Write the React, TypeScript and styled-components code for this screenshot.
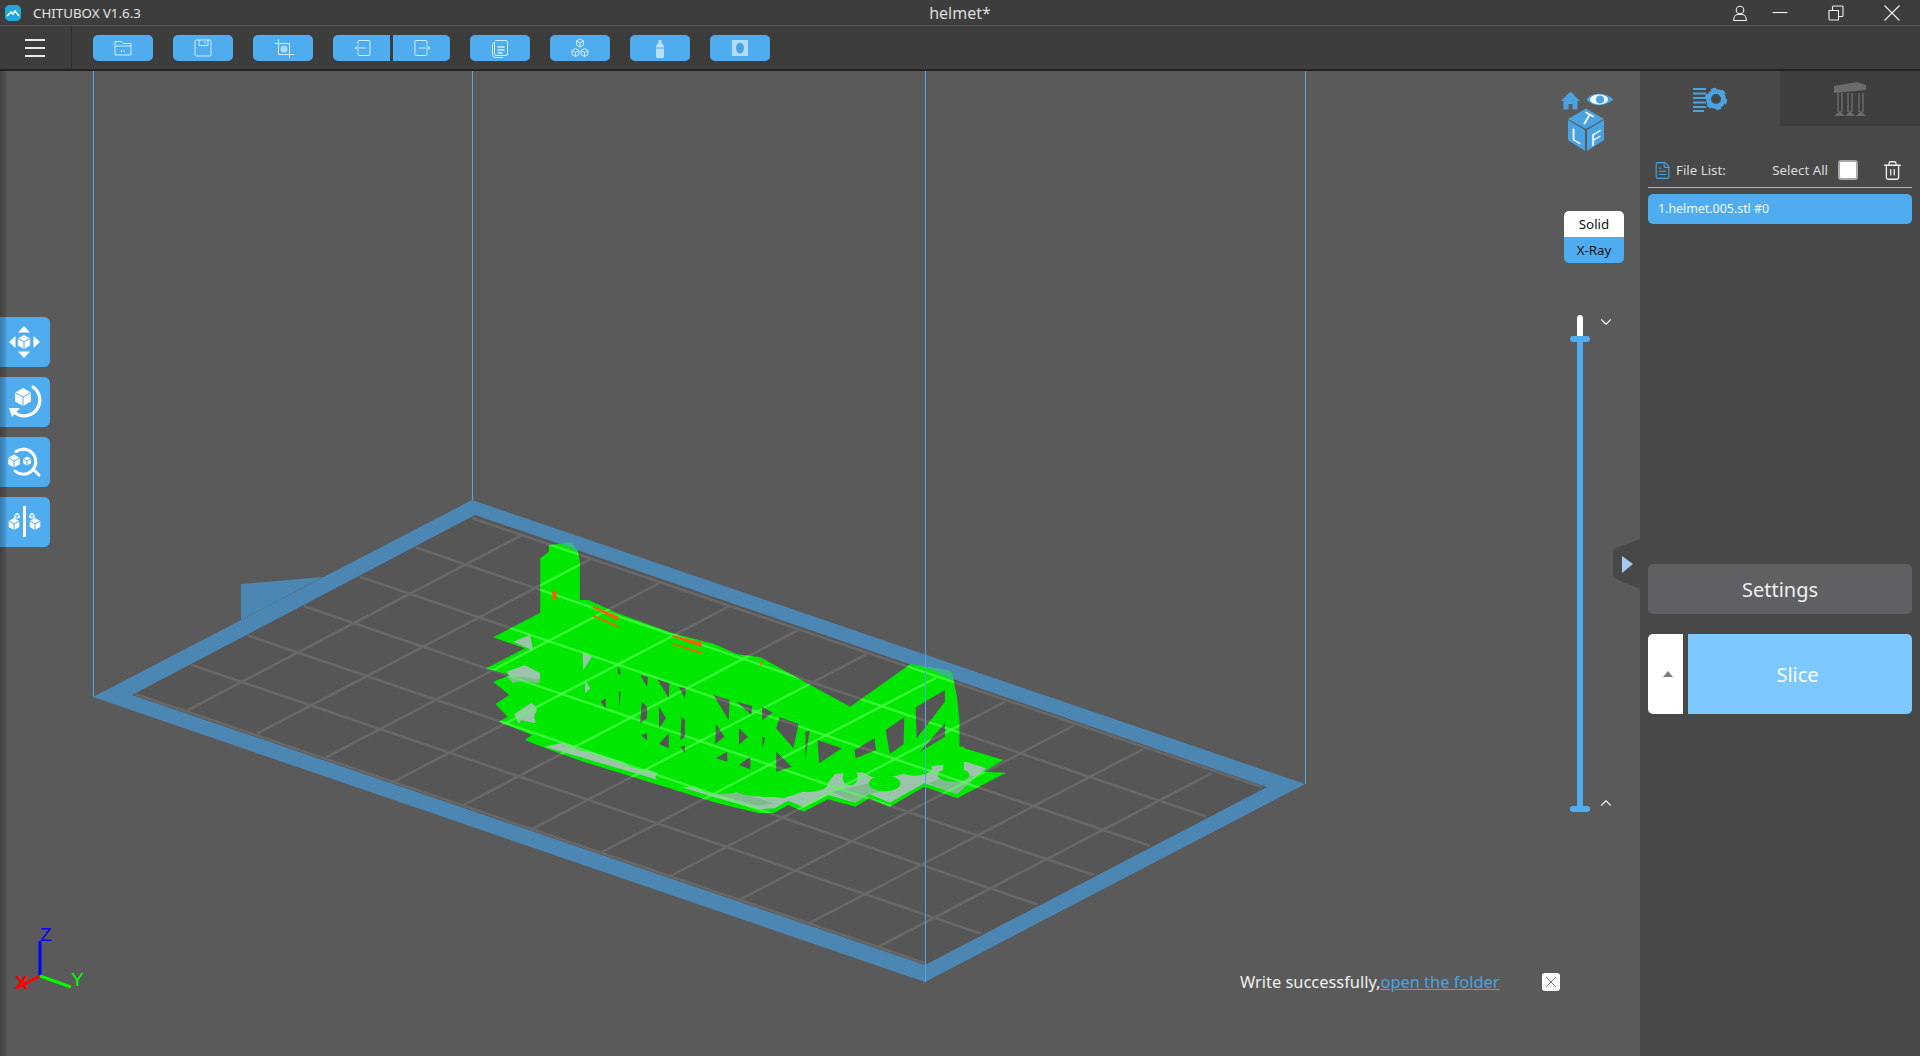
import styled, { createGlobalStyle } from "styled-components";
import { ChevronDown, ChevronUp, FileText, Trash2 } from "lucide-react";

const BLUE = "#4fadef";
const ICON_BLUE = "#4aa3e0";
const LINE = "#d4ecfc";

const GlobalStyle = createGlobalStyle`
  html, body {
    margin: 0;
    padding: 0;
    height: 100%;
    overflow: hidden;
    background: #5a5a5a;
  }
  * {
    box-sizing: border-box;
  }
  body {
    font-family: "Noto Sans", "Liberation Sans", sans-serif;
  }
`;

const SILHOUETTE =
  "M200 75L265 68L285 95L290 125L290 240L315 240L400 280L560 340L680 372L745 402L815 412L950 490L1075 560L1250 432L1370 455L1385 530L1392 600L1392 680L1520 720L1462 755L1528 758L1385 835L1290 800L1190 860L1130 835L1090 860L1010 838L940 875L895 855L855 878L810 880L690 850L300 725L190 685L130 660L150 645L55 605L80 590L45 552L85 525L38 485L90 465L18 445L130 385L38 352L175 278L175 115L200 95Z";

const HOLES = [
  "M465 465L488 472L485 500Z",
  "M515 478L550 490L548 535Z",
  "M577 500L598 505L595 535Z",
  "M678 525L725 540L722 600Z",
  "M745 545L790 558L788 585Z",
  "M818 560L850 578L820 600Z",
  "M870 592L925 612L910 685L860 625Z",
  "M945 635L957 632L945 715Z",
  "M980 660L1050 685L985 730Z",
  "M1088 690L1145 655L1150 690L1090 715Z",
  "M1178 630L1232 592L1230 672L1190 702Z",
  "M1265 562L1350 510L1350 545L1268 655Z",
  "M1278 695L1350 610L1350 650Z",
  "M470 545L485 560L485 595L465 610Z",
  "M520 560L540 595L520 625Z",
  "M585 590L595 600L595 650L582 660Z",
  "M685 612L710 650L683 672Z",
  "M752 625L778 650L752 675Z",
  "M820 650L828 655L820 685Z",
  "M468 645L485 640L485 662Z",
  "M520 672L548 640L548 685Z",
  "M685 715L718 695L718 725Z",
  "M752 735L785 710L785 748Z",
  "M860 695L905 740L860 755Z",
  "M582 680L595 678L595 700Z",
  "M403 515L408 515L405 565Z",
  "M350 545L365 535L365 565Z",
  "M400 440L410 458L402 465Z",
];

const PLATES = [
  "M188 680L240 668L370 712L520 760L680 805L880 835L1010 790L1030 762L1110 757L1140 772L1210 767L1300 740L1410 725L1470 745L1440 770L1385 822L1290 790L1190 848L1130 822L1090 848L1010 825L940 862L895 842L855 865L810 868L690 835L500 775Z",
  "M95 365L145 345L155 392L125 378Z",
  "M298 395L325 410L300 450Z",
  "M78 455L130 435L175 460L172 490L125 482L95 488Z",
  "M100 582L150 548L165 565L160 610L120 600L112 612Z",
  "M305 480L320 505L305 520Z",
];

const PLATE_SHADES = [
  "M520 775L690 825L810 858L855 850L700 800L560 765Z",
  "M78 470L125 470L172 478L172 490L125 482L95 488Z",
  "M1020 815L1130 790L1190 810L1130 822L1090 848Z",
  "M1300 790L1385 760L1440 770L1385 822Z",
];

const FEET: [number, number, number, number][] = [
  [205, 590, 48, 26],
  [270, 640, 40, 24],
  [330, 672, 60, 24],
  [480, 722, 60, 26],
  [600, 770, 90, 32],
  [700, 792, 75, 30],
  [840, 805, 105, 26],
  [950, 792, 60, 24],
  [1075, 772, 22, 24],
  [1175, 790, 46, 24],
  [1262, 745, 50, 22],
  [1375, 765, 46, 20],
];

// necks joining the feet up to the body: x, y, width, height
const NECKS: [number, number, number, number][] = [
  [1345, 680, 60, 85],
  [1150, 710, 50, 80],
  [1235, 700, 50, 45],
  [1060, 730, 30, 42],
  [920, 750, 60, 40],
];

const gridA = Array.from({ length: 7 }, (_, i) => ({
  x1: 135 + 56.2 * i,
  y1: 694 - 29.3 * i,
  x2: 925 + 56.2 * i,
  y2: 963 - 29.3 * i,
}));

const gridB = Array.from({ length: 11 }, (_, k) => ({
  x1: 188 + 69 * k,
  y1: 710 + 23.7 * k,
  x2: 522 + 69 * k,
  y2: 535 + 23.8 * k,
}));

const GridLines = ({ color, width }: { color: string; width: number }) => (
  <g stroke={color} strokeWidth={width}>
    {[...gridA, ...gridB].map((l, i) => (
      <line key={i} {...l} />
    ))}
  </g>
);

const MODEL_TRANSFORM = "translate(480 520) scale(0.3444 0.3333)";

const Scene = () => (
  <SceneSvg viewBox="0 71 1640 985">
    <defs>
      <clipPath id="model-clip">
        <path
          d={SILHOUETTE + HOLES.join("")}
          clipRule="evenodd"
          transform={MODEL_TRANSFORM}
        />
      </clipPath>
    </defs>
    <polygon points="475,515 1267,787 925,965 132,695" fill="#565656" />
    <GridLines color="#686868" width={2.6} />
    <path
      d="M472 500L1305 784L925 982L93 697Z M475 515L132 695L925 965L1267 787Z"
      fill="#4c86b3"
      fillRule="evenodd"
    />
    <polygon points="241,584 323,577 260,610 241,620" fill="#4c86b3" />
    <g transform={MODEL_TRANSFORM}>
      <path
        d={SILHOUETTE + HOLES.join("")}
        fill="#00e800"
        fillRule="evenodd"
      />
      <polygon points="235,72 265,65 285,95 255,80" fill="#3bb58a" />
      <polygon points="1255,432 1365,452 1375,480 1300,445" fill="#3bb58a" />
      {PLATES.map((d) => (
        <path key={d} d={d} fill="#9cc4ab" />
      ))}
      {PLATE_SHADES.map((d) => (
        <path key={d} d={d} fill="#7fbb8f" />
      ))}
      {NECKS.map(([x, y, width, height]) => (
        <rect key={x} x={x} y={y} width={width} height={height} fill="#00e800" />
      ))}
      {FEET.map(([cx, cy, rx, ry]) => (
        <ellipse key={cx} cx={cx} cy={cy} rx={rx} ry={ry} fill="#00e800" />
      ))}
    </g>
    <g clipPath="url(#model-clip)">
      <GridLines color="rgba(90,255,90,0.6)" width={2.5} />
    </g>
    <g transform={MODEL_TRANSFORM} fill="#ff5a10">
      <polygon points="325,262 330,258 403,290 400,302" />
      <polygon points="325,288 330,285 403,318 398,322" />
      <polygon points="555,348 560,345 645,368 642,382" />
      <polygon points="555,372 560,370 645,396 640,401" />
      <rect x="210" y="212" width="12" height="26" />
      <polygon points="812,425 820,422 816,442" />
    </g>
    <g stroke="#55a5e0" strokeWidth={1}>
      <line x1={93.5} y1={71} x2={93.5} y2={697} />
      <line x1={472.5} y1={71} x2={472.5} y2={500} />
      <line x1={925.5} y1={71} x2={925.5} y2={982} />
      <line x1={1305.5} y1={71} x2={1305.5} y2={784} />
    </g>
    <g strokeWidth={3}>
      <line x1={40} y1={976} x2={40} y2={941} stroke="#0000ff" />
      <line x1={40} y1={976} x2={16} y2={988} stroke="#ff0000" />
      <line x1={40} y1={976} x2={71} y2={987} stroke="#00ff00" />
    </g>
    <AxisLabel x={40} y={941} fill="#0000ff">Z</AxisLabel>
    <AxisLabel x={15} y={989} fill="#ff0000" fontWeight={700}>X</AxisLabel>
    <AxisLabel x={71} y={986} fill="#00ff00">Y</AxisLabel>
  </SceneSvg>
);

const Cube = ({ cx, cy, r }: { cx: number; cy: number; r: number }) => (
  <g>
    <polygon
      points={`${cx},${cy - r} ${cx + r * 0.88},${cy - r / 2} ${cx + r * 0.88},${cy + r / 2} ${cx},${cy + r} ${cx - r * 0.88},${cy + r / 2} ${cx - r * 0.88},${cy - r / 2}`}
      fill="#fff"
    />
    <path
      d={`M${cx} ${cy}L${cx} ${cy + r}M${cx} ${cy}L${cx + r * 0.88} ${cy - r / 2}M${cx} ${cy}L${cx - r * 0.88} ${cy - r / 2}`}
      stroke={BLUE}
      strokeWidth={1}
    />
  </g>
);

const MoveIcon = () => (
  <ToolSvg viewBox="0 0 50 50">
    <polygon points="24,9 30,15.500 18,15.500" fill="#fff" />
    <polygon points="24,41 30,34.500 18,34.500" fill="#fff" />
    <polygon points="9,25 15.500,19 15.500,31" fill="#fff" />
    <polygon points="40,25 33.500,19 33.500,31" fill="#fff" />
    <Cube cx={24} cy={25} r={7} />
  </ToolSvg>
);

const RotateIcon = () => (
  <ToolSvg viewBox="0 0 50 50">
    <Cube cx={23} cy={20} r={9} />
    <path
      d="M33 10A15.500 15.500 0 0 1 15 36"
      fill="none"
      stroke="#fff"
      strokeWidth={3.200}
      strokeLinecap="round"
    />
    <polygon points="9,31 20,31 12,40" fill="#fff" />
  </ToolSvg>
);

const ScaleIcon = () => (
  <ToolSvg viewBox="0 0 50 50">
    <Cube cx={14} cy={24} r={6.500} />
    <Cube cx={27} cy={24} r={4.500} />
    <path
      d="M16 14.500A12.500 12.500 0 1 1 15 34M34 33L39 38"
      fill="none"
      stroke="#fff"
      strokeWidth={3}
      strokeLinecap="round"
    />
  </ToolSvg>
);

const MirrorIcon = () => (
  <ToolSvg viewBox="0 0 50 50">
    <rect x={23} y={9} width={3} height={31} fill="#fff" />
    <Cube cx={14} cy={27} r={6} />
    <Cube cx={17} cy={19} r={3.200} />
    <Cube cx={35} cy={27} r={6} />
    <Cube cx={32} cy={19} r={3.200} />
  </ToolSvg>
);

const OpenIcon = () => (
  <BarSvg viewBox="0 0 24 24">
    <path d="M4 5.500h6.500l2 2H20V19H4zM4 10h16M10.500 14v2M13 14v2" />
  </BarSvg>
);

const SaveIcon = () => (
  <BarSvg viewBox="0 0 24 24">
    <path d="M5.500 4h13a1.500 1.500 0 0 1 1.500 1.500v13a1.500 1.500 0 0 1-1.500 1.500h-13A1.500 1.500 0 0 1 4 18.500v-13A1.500 1.500 0 0 1 5.500 4zM8 4v5.500h9V4M14 5.500v2" />
  </BarSvg>
);

const CropIcon = () => (
  <BarSvg viewBox="0 0 24 24">
    <path d="M7.500 3v15.500H23M3.500 7.500h15V22" />
    <circle cx={13} cy={13} r={3.500} fill={LINE} fillOpacity={0.7} stroke="none" />
  </BarSvg>
);

const ImportIcon = () => (
  <BarSvg viewBox="0 0 24 24">
    <path d="M8 8V5.500A1 1 0 0 1 9 4.500h10a1 1 0 0 1 1 1v13a1 1 0 0 1-1 1H9a1 1 0 0 1-1-1V16M16 12H6M9 9l-4 3 4 3" />
  </BarSvg>
);

const ExportIcon = () => (
  <BarSvg viewBox="0 0 24 24">
    <path d="M17 8V5.500a1 1 0 0 0-1-1H6a1 1 0 0 0-1 1v13a1 1 0 0 0 1 1h10a1 1 0 0 0 1-1V16M9 12h10M16 9l4 3-4 3" />
  </BarSvg>
);

const CopyIcon = () => (
  <BarSvg viewBox="0 0 24 24">
    <path d="M7 4.500h11a1.500 1.500 0 0 1 1.500 1.500v12a1.500 1.500 0 0 1-1.500 1.500H8a1.500 1.500 0 0 1-1.500-1.500V6M6.500 6.500L4.500 8v11.500L7 21.500h8" />
    <path d="M9.500 11h7M9.500 14h7M9.500 17h5" strokeWidth={1.400} />
  </BarSvg>
);

const CubesIcon = () => (
  <BarSvg viewBox="0 0 24 24">
    <path d="M12 3l3.500 2v4L12 11 8.500 9V5zM12 7v4M8.500 5L12 7l3.500-2" />
    <path d="M7.500 12.500L11 14.500v4l-3.500 2-3.500-2v-4zM7.500 16.500v4M4 14.500l3.500 2 3.500-2" />
    <path d="M16.500 12.500l3.500 2v4l-3.500 2-3.500-2v-4zM16.500 16.500v4M13 14.500l3.500 2 3.500-2" />
  </BarSvg>
);

const BottleIcon = () => (
  <BarSvg viewBox="0 0 24 24">
    <path
      d="M10.500 4h3v3l2.500 3v11a1 1 0 0 1-1 1H9a1 1 0 0 1-1-1V10l2.500-3z"
      fill={LINE}
      fillOpacity={0.8}
      stroke="none"
    />
    <path d="M8 12h8" stroke={BLUE} />
  </BarSvg>
);

const ResinIcon = () => (
  <BarSvg viewBox="0 0 24 24">
    <rect x={4} y={4} width={16} height={16} fill={LINE} fillOpacity={0.75} stroke="none" />
    <ellipse cx={12} cy={12} rx={4} ry={5.500} fill={ICON_BLUE} stroke="none" />
  </BarSvg>
);

const NavCube = () => (
  <CubeSvg viewBox="0 0 56 62">
    <path d="M1 11L10.500 1.500L20 11H17.500V19.500H12.500V14H8.500V19.500H3.500V11Z" fill={ICON_BLUE} />
    <path d="M26.500 9.500C31 3 44 1 53.500 9.500C44 18 31 16 26.500 9.500Z" fill={ICON_BLUE} />
    <ellipse cx={39} cy={9.500} rx={9} ry={5} fill="#f4f9fd" />
    <circle cx={40} cy={9.500} r={4} fill={ICON_BLUE} />
    <polygon points="26,18.500 44,29 26,39 8,29" fill={ICON_BLUE} />
    <polygon points="8,30 25,40 25,61 8,50" fill={ICON_BLUE} />
    <polygon points="27,40 44,30 44,50 27,61" fill={ICON_BLUE} />
    <CubeLetter transform="translate(24 34) rotate(30)">T</CubeLetter>
    <CubeLetter transform="translate(16 52) skewY(30)">L</CubeLetter>
    <CubeLetter transform="translate(36 54) skewY(-30)">F</CubeLetter>
  </CubeSvg>
);

const App = () => {
  return (
    <Page>
      <GlobalStyle />
      <TitleBar>
        <Brand>
          <svg width="16" height="16" viewBox="0 0 16 16">
            <path d="M3 0H13L16 3V13L13 16H3L0 13V3Z" fill="#1fa8d8" />
            <path d="M2 11L6 7L8 9L10 6L14 11" fill="none" stroke="#fff" strokeWidth={1.500} />
          </svg>
          CHITUBOX V1.6.3
        </Brand>
        <DocTitle>helmet*</DocTitle>
        <WinButtons>
          <UserSlot>
            <WinSvg viewBox="0 0 16 16">
              <circle cx={8} cy={5} r={3.800} />
              <path d="M1.800 15.500v-1.500c0-2.500 2-4.500 4.500-4.500h3.400c2.500 0 4.500 2 4.500 4.500v1.500z" />
            </WinSvg>
          </UserSlot>
          <WinSvg viewBox="0 0 16 16">
            <path d="M0.500 7.500H15.500" />
          </WinSvg>
          <WinSvg viewBox="0 0 16 16">
            <path d="M1 5.500h9.500v9.500H2a1 1 0 0 1-1-1zM4.500 5.500V2a1 1 0 0 1 1-1H14a1 1 0 0 1 1 1v8.500a1 1 0 0 1-1 1h-3.500" />
          </WinSvg>
          <WinSvg viewBox="0 0 16 16">
            <path d="M0.500 0.500L15.500 15.500M15.500 0.500L0.500 15.500" />
          </WinSvg>
        </WinButtons>
      </TitleBar>
      <Toolbar>
        <MenuCell>
          <MenuBar />
          <MenuBar />
          <MenuBar />
        </MenuCell>
        <ToolGroup>
          <BarButton><OpenIcon /></BarButton>
          <BarButton><SaveIcon /></BarButton>
          <BarButton><CropIcon /></BarButton>
          <Joined>
            <BarButton $side="left"><ImportIcon /></BarButton>
            <BarButton $side="right"><ExportIcon /></BarButton>
          </Joined>
          <BarButton><CopyIcon /></BarButton>
          <BarButton><CubesIcon /></BarButton>
          <BarButton><BottleIcon /></BarButton>
          <BarButton><ResinIcon /></BarButton>
        </ToolGroup>
      </Toolbar>
      <Main>
        <Viewport>
          <Scene />
          <EdgeShade />
          <SideTools>
            <SideTool><MoveIcon /></SideTool>
            <SideTool><RotateIcon /></SideTool>
            <SideTool><ScaleIcon /></SideTool>
            <SideTool><MirrorIcon /></SideTool>
          </SideTools>
          <NavCube />
          <ViewModes>
            <ViewMode $active>Solid</ViewMode>
            <ViewMode>X-Ray</ViewMode>
          </ViewModes>
          <LayerSlider>
            <SliderTop />
            <SliderHandle />
            <SliderTrack />
            <SliderHandle />
            <SliderArrow $top={-2}>
              <ChevronDown size={18} strokeWidth={1.500} />
            </SliderArrow>
            <SliderArrow $top={479}>
              <ChevronUp size={18} strokeWidth={1.500} />
            </SliderArrow>
          </LayerSlider>
          <Notice>
            <span>
              Write successfully,<NoticeLink>open the folder</NoticeLink>
            </span>
            <NoticeClose>
              <svg width="12" height="12" viewBox="0 0 12 12">
                <path d="M1 1L11 11M11 1L1 11" stroke="#777" strokeWidth={1} />
              </svg>
            </NoticeClose>
          </Notice>
        </Viewport>
        <Panel>
          <CollapseHandle viewBox="0 0 27 50">
            <polygon points="27,0 3,9 0,12 0,37 3,40 27,50" fill="#484848" />
            <polygon points="9,17 20,25 9,34" fill="#a8c8f0" />
          </CollapseHandle>
          <Tabs>
            <Tab $active>
              <svg width="36" height="28" viewBox="0 0 36 28">
                <g stroke={ICON_BLUE} strokeWidth={2}>
                  <path d="M1 4H14M1 8.500H14M1 13H14M1 17.500H14M1 22H14M1 26H12" />
                </g>
                <circle cx={24} cy={14} r={7.500} fill="none" stroke={ICON_BLUE} strokeWidth={5} />
                <circle cx={24} cy={14} r={10} fill="none" stroke={ICON_BLUE} strokeWidth={2.500} strokeDasharray="5 5.470" />
              </svg>
            </Tab>
            <Tab>
              <svg width="34" height="36" viewBox="0 0 34 36">
                <path d="M1 5L24 1L33 4V9L1 12Z" fill="#6b6b6b" />
                <g stroke="#6b6b6b" strokeWidth={1.500} fill="none">
                  <path d="M5 12V31M9 12V31M15 12V31M19 12V31M26 12V31M30 12V31" />
                </g>
                <path d="M1 35L7 30L12 35ZM12 35L17 30L22 35ZM23 35L28 30L33 35Z" fill="#6b6b6b" />
              </svg>
            </Tab>
          </Tabs>
          <ListHeader>
            <FileText size={19} color={ICON_BLUE} strokeWidth={1.400} />
            <ListTitle>File List:</ListTitle>
            <SelectAll>Select All</SelectAll>
            <Checkbox />
            <Trash2 size={21} color="#f0f0f0" strokeWidth={1.500} />
          </ListHeader>
          <FileRow>1.helmet.005.stl #0</FileRow>
          <PanelFooter>
            <SettingsButton>Settings</SettingsButton>
            <SliceRow>
              <SliceToggle />
              <SliceButton>Slice</SliceButton>
            </SliceRow>
          </PanelFooter>
        </Panel>
      </Main>
    </Page>
  );
};

const Page = styled.div`
  display: flex;
  flex-direction: column;
  width: 1920px;
  height: 1056px;
  overflow: hidden;
`;

const TitleBar = styled.div`
  display: grid;
  grid-template-columns: 1fr auto 1fr;
  align-items: center;
  height: 26px;
  background: #3d3d3d;
  border-bottom: 1px solid #565656;
  color: #e4e4e4;
`;

const Brand = styled.div`
  display: flex;
  align-items: center;
  gap: 12px;
  padding-left: 5px;
  font-size: 13.3px;
`;

const DocTitle = styled.div`
  font-size: 16px;
  color: #dcdcdc;
`;

const WinButtons = styled.div`
  display: flex;
  justify-content: flex-end;
  align-items: center;
  gap: 40px;
  padding-right: 20px;
`;

const UserSlot = styled.div`
  display: flex;
  margin-right: -16px;
`;

const WinSvg = styled.svg`
  width: 16px;
  height: 16px;
  fill: none;
  stroke: #f0f0f0;
  stroke-width: 1.1;
`;

const Toolbar = styled.div`
  display: flex;
  height: 45px;
  background: #3d3d3d;
  border-bottom: 2px solid #222;
`;

const MenuCell = styled.div`
  display: flex;
  flex-direction: column;
  justify-content: center;
  gap: 6px;
  width: 72px;
  padding-left: 25px;
  padding-top: 1px;
  border-right: 1px solid #2e2e2e;
`;

const MenuBar = styled.div`
  width: 20px;
  height: 2px;
  background: #e8e8e8;
`;

const ToolGroup = styled.div`
  display: flex;
  align-items: center;
  gap: 20px;
  padding-left: 21px;
  padding-top: 1px;
`;

const Joined = styled.div`
  display: flex;
  gap: 3px;
`;

const BarButton = styled.div<{ $side?: "left" | "right" }>`
  display: flex;
  align-items: center;
  justify-content: center;
  width: ${(p) => (p.$side ? "57px" : "60px")};
  height: 26px;
  background: ${BLUE};
  border-radius: ${(p) =>
    p.$side === "left"
      ? "5px 0 0 5px"
      : p.$side === "right"
        ? "0 5px 5px 0"
        : "5px"};
`;

const BarSvg = styled.svg`
  width: 24px;
  height: 24px;
  fill: none;
  stroke: ${LINE};
  stroke-width: 1;
`;

const Main = styled.div`
  display: flex;
  flex: 1;
  min-height: 0;
`;

const Viewport = styled.div`
  position: relative;
  flex: 1;
  background: #5a5a5a;
  overflow: hidden;
`;

const SceneSvg = styled.svg`
  position: absolute;
  inset: 0;
  width: 1640px;
  height: 985px;
`;

const AxisLabel = styled.text`
  font-family: "Liberation Sans", sans-serif;
  font-size: 19px;
`;

const EdgeShade = styled.div`
  position: absolute;
  left: 0;
  top: 0;
  bottom: 0;
  z-index: 2;
  width: 7px;
  background: linear-gradient(to right, rgba(0, 0, 0, 0.28), rgba(0, 0, 0, 0.16) 70%, rgba(0, 0, 0, 0));
  pointer-events: none;
`;

const SideTools = styled.div`
  position: absolute;
  left: 0;
  top: 246px;
  display: flex;
  flex-direction: column;
  gap: 10px;
`;

const SideTool = styled.div`
  width: 50px;
  height: 50px;
  background: ${BLUE};
  border-radius: 0 6px 6px 0;
`;

const ToolSvg = styled.svg`
  display: block;
  width: 50px;
  height: 50px;
`;

const CubeSvg = styled.svg`
  position: absolute;
  left: 1560px;
  top: 19px;
  width: 56px;
  height: 62px;
`;

const CubeLetter = styled.text`
  font-family: "Liberation Sans", sans-serif;
  font-size: 17px;
  fill: #fff;
  text-anchor: middle;
`;

const ViewModes = styled.div`
  position: absolute;
  left: 1564px;
  top: 140px;
  display: flex;
  flex-direction: column;
`;

const ViewMode = styled.div<{ $active?: boolean }>`
  display: flex;
  align-items: center;
  justify-content: center;
  width: 60px;
  height: 26px;
  background: ${(p) => (p.$active ? "#fff" : BLUE)};
  border-radius: ${(p) => (p.$active ? "5px 5px 0 0" : "0 0 5px 5px")};
  font-size: 13.3px;
  color: #111;
`;

const LayerSlider = styled.div`
  position: absolute;
  left: 1570px;
  top: 244px;
  display: flex;
  flex-direction: column;
  align-items: center;
  width: 20px;
  height: 497px;
`;

const SliderTop = styled.div`
  width: 6px;
  height: 21px;
  background: #fff;
  border-radius: 3px 3px 0 0;
`;

const SliderHandle = styled.div`
  width: 20px;
  height: 6px;
  background: ${BLUE};
  border-radius: 3px;
`;

const SliderTrack = styled.div`
  flex: 1;
  width: 6px;
  background: ${BLUE};
`;

const SliderArrow = styled.div<{ $top: number }>`
  position: absolute;
  left: 27px;
  top: ${(p) => p.$top}px;
  display: flex;
  color: #f0f0f0;
`;

const Notice = styled.div`
  position: absolute;
  left: 1240px;
  top: 899px;
  display: flex;
  align-items: center;
  gap: 42px;
  font-size: 16.4px;
  color: #f0f0f0;
`;

const NoticeLink = styled.span`
  color: ${ICON_BLUE};
  text-decoration: underline;
`;

const NoticeClose = styled.div`
  display: flex;
  align-items: center;
  justify-content: center;
  width: 18px;
  height: 18px;
  background: #fff;
  border-radius: 3px;
`;

const Panel = styled.div`
  position: relative;
  display: flex;
  flex-direction: column;
  width: 280px;
  background: #484848;
`;

const CollapseHandle = styled.svg`
  position: absolute;
  left: -27px;
  top: 468px;
  width: 27px;
  height: 50px;
`;

const Tabs = styled.div`
  display: flex;
  height: 55px;
`;

const Tab = styled.div<{ $active?: boolean }>`
  display: flex;
  align-items: center;
  justify-content: center;
  flex: 1;
  background: ${(p) => (p.$active ? "#484848" : "#3e3e3e")};
`;

const ListHeader = styled.div`
  display: flex;
  align-items: center;
  height: 45px;
  margin: 17px 8px 0;
  padding: 10px 9px 0 5px;
  border-bottom: 1px solid #b4b4b4;
`;

const ListTitle = styled.span`
  flex: 1;
  margin-left: 4px;
  font-size: 13.3px;
  color: #dcdcdc;
`;

const SelectAll = styled.span`
  font-size: 13.3px;
  color: #dcdcdc;
`;

const Checkbox = styled.div`
  width: 20px;
  height: 20px;
  margin: 0 24px 0 10px;
  background: #fff;
  border: 2px solid #a8a8a8;
  border-radius: 3px;
`;

const FileRow = styled.div`
  display: flex;
  align-items: center;
  height: 30px;
  margin: 6px 8px 0;
  padding: 0 0 1px 10px;
  background: ${BLUE};
  border-radius: 5px;
  font-size: 12.4px;
  color: #eef7fe;
`;

const PanelFooter = styled.div`
  display: flex;
  flex-direction: column;
  gap: 20px;
  margin-top: auto;
  padding: 0 8px 342px;
`;

const SettingsButton = styled.div`
  display: flex;
  align-items: center;
  justify-content: center;
  height: 50px;
  background: #5f6063;
  border-radius: 5px;
  font-size: 20px;
  color: #f0f0f0;
`;

const SliceRow = styled.div`
  display: flex;
  gap: 5px;
  height: 80px;
`;

const SliceToggle = styled.div`
  position: relative;
  width: 35px;
  background: #fff;
  border-radius: 5px 0 0 5px;
  &::after {
    content: "";
    position: absolute;
    left: 15px;
    top: 37px;
    border-left: 5px solid transparent;
    border-right: 5px solid transparent;
    border-bottom: 6px solid #808080;
  }
`;

const SliceButton = styled.div`
  display: flex;
  flex: 1;
  align-items: center;
  justify-content: center;
  padding-right: 5px;
  background: #7cc8ff;
  border-radius: 0 5px 5px 0;
  font-size: 20px;
  color: #fff;
`;

export default App;
